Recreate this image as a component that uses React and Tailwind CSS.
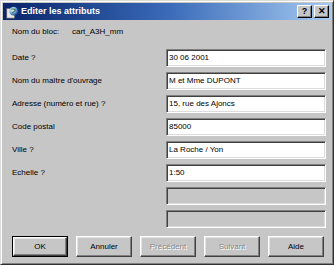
import React from "react";

const font = { fontFamily: '"Liberation Sans", Arial, sans-serif' };

function Field({ label, value, disabled }) {
  return (
    <div className="flex h-[18px] items-center">
      <div className="w-[154px] text-[8px] text-black leading-none whitespace-nowrap">{label}</div>
      <div
        className={
          "w-[160px] h-[18px] border border-t-[#808080] border-l-[#808080] border-b-white border-r-white shadow-[inset_1px_1px_0_#404040,inset_-1px_-1px_0_#dcdcdc] flex items-center pl-[2px] text-[8px] leading-none text-black whitespace-nowrap " +
          (disabled ? "bg-[#c6c6c6]" : "bg-white")
        }
      >
        {value}
      </div>
    </div>
  );
}

function Btn({ children, def, disabled }) {
  const inner = (
    <div className="w-full h-full border border-t-white border-l-white border-b-[#404040] border-r-[#404040] shadow-[inset_-1px_-1px_0_#808080,inset_1px_1px_0_#e4e4e4] flex items-center justify-center text-[8px] leading-none bg-[#c6c6c6]">
      {disabled ? (
        <span className="text-[#8a8a8a] [text-shadow:1px_1px_0_#ffffff]">{children}</span>
      ) : (
        <span className="text-black">{children}</span>
      )}
    </div>
  );
  return (
    <div className={"w-[56px] h-[21px] " + (def ? "border border-black" : "")}>{inner}</div>
  );
}

export default function App() {
  return (
    <div
      style={font}
      className="w-[334px] h-[265px] bg-[#c6c6c6] border border-t-[#dcdcdc] border-l-[#dcdcdc] border-b-[#303030] border-r-[#303030] shadow-[inset_1px_1px_0_#ffffff,inset_-1px_-1px_0_#808080] p-[2px] flex flex-col"
    >
      <div className="h-[17px] flex items-center bg-gradient-to-r from-[#0a246a] via-[#3a6ab8] to-[#a6caf0] pl-[2px] pr-[2px]">
        <svg width="14" height="14" viewBox="0 0 16 16" className="mr-[2px]">
          <defs>
            <radialGradient id="g" cx="0.35" cy="0.35" r="0.7">
              <stop offset="0" stopColor="#ffffff" />
              <stop offset="0.5" stopColor="#7fb0e8" />
              <stop offset="1" stopColor="#1a3f8a" />
            </radialGradient>
          </defs>
          <rect x="2" y="4" width="9" height="11" fill="#e8e8e8" stroke="#606060" strokeWidth="0.8" />
          <circle cx="10" cy="7" r="5" fill="url(#g)" />
          <path d="M7 5 Q10 4 12 6 Q10 8 8 9" stroke="#2a6a2a" strokeWidth="1.2" fill="none" />
        </svg>
        <span className="text-white font-bold text-[9px] leading-none">Editer les attributs</span>
        <div className="ml-auto flex gap-[2px]">
          <div className="w-[15px] h-[13px] bg-[#c6c6c6] border border-t-white border-l-white border-b-black border-r-black shadow-[inset_-1px_-1px_0_#808080] flex items-center justify-center text-[9px] font-bold leading-none text-black">?</div>
          <div className="w-[15px] h-[13px] bg-[#c6c6c6] border border-t-white border-l-white border-b-black border-r-black shadow-[inset_-1px_-1px_0_#808080] flex items-center justify-center text-[9px] font-bold leading-none text-black">✕</div>
        </div>
      </div>

      <div className="flex flex-col pl-[9px] text-[8px]">
        <div className="h-[20px] flex items-center mt-[2px] whitespace-nowrap leading-none">
          <span className="w-[60px] text-black">Nom du bloc:</span>
          <span className="text-black">cart_A3H_mm</span>
        </div>
        <div className="flex flex-col gap-[5px] mt-[7px]">
          <Field label="Date ?" value="30 06 2001" />
          <Field label="Nom du maître d'ouvrage" value="M et Mme DUPONT" />
          <Field label="Adresse (numéro et rue) ?" value="15, rue des Ajoncs" />
          <Field label="Code postal" value="85000" />
          <Field label="Ville ?" value="La Roche / Yon" />
          <Field label="Echelle ?" value="1:50" />
          <Field label="" value="" disabled />
          <Field label="" value="" disabled />
        </div>
        <div className="flex gap-[8px] mt-[8px]">
          <Btn def>OK</Btn>
          <Btn>Annuler</Btn>
          <Btn disabled>Précédent</Btn>
          <Btn disabled>Suivant</Btn>
          <Btn>Aide</Btn>
        </div>
      </div>
    </div>
  );
}
